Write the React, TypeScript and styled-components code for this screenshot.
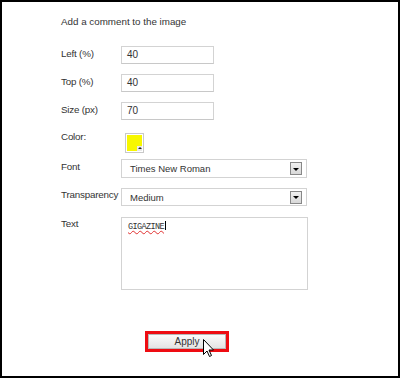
import React from "react";
import styled, { createGlobalStyle } from "styled-components";

const Global = createGlobalStyle`
  html, body {
    margin: 0;
    padding: 0;
    background: #fff;
  }
  * {
    box-sizing: border-box;
  }
`;

const Frame = styled.div`
  width: 400px;
  height: 378px;
  border: 2px solid #000;
  padding: 14px 0 0 59px;
  font-family: "Liberation Sans", Arial, sans-serif;
  color: #333;
  background: #fff;
`;

const Title = styled.div`
  font-size: 9.8px;
  line-height: 12px;
  height: 12px;
`;

const Row = styled.div<{ $mt: number }>`
  display: flex;
  align-items: flex-start;
  margin-top: ${(p) => p.$mt}px;
`;

const Label = styled.div<{ $pt: number }>`
  width: 60px;
  flex-shrink: 0;
  font-size: 9.8px;
  letter-spacing: -0.2px;
  line-height: 12px;
  padding-top: ${(p) => p.$pt}px;
  white-space: nowrap;
`;

const TextInput = styled.div`
  width: 93px;
  height: 18px;
  border: 1px solid #d3d3d3;
  border-bottom-color: #c8c8c8;
  padding: 0 0 0 5px;
  font-size: 10px;
  line-height: 16px;
  color: #333;
`;

const Swatch = styled.div`
  position: relative;
  width: 19px;
  height: 20px;
  margin: 3px 0 0 4px;
  border: 1px solid #c9c9c9;
  background: #fff;
  padding: 1px;
`;

const SwatchFill = styled.div`
  width: 100%;
  height: 100%;
  background: #f7f700;
`;

const SwatchArrow = styled.div`
  position: absolute;
  right: 1px;
  bottom: 1px;
  width: 5px;
  height: 5px;
  background: #e8e8e8;
  &::after {
    content: "";
    position: absolute;
    left: 1px;
    top: 1px;
    border-left: 2px solid transparent;
    border-right: 2px solid transparent;
    border-bottom: 2px solid #222;
  }
`;

const Select = styled.div<{ $h: number }>`
  width: 186px;
  height: ${(p) => p.$h}px;
  border: 1px solid #d3d3d3;
  display: flex;
  align-items: center;
  justify-content: space-between;
  padding: 0 4px 0 8px;
  font-size: 9.5px;
  color: #333;
`;

const DropButton = styled.div`
  width: 12px;
  height: 13px;
  border: 1px solid #888;
  background: linear-gradient(#f0f0f0, #d8d8d8);
  display: flex;
  align-items: center;
  justify-content: center;
  &::after {
    content: "";
    border-left: 3px solid transparent;
    border-right: 3px solid transparent;
    border-top: 3px solid #000;
    margin-top: 1px;
  }
`;

const TextArea = styled.div`
  width: 187px;
  height: 73px;
  border: 1px solid #d3d3d3;
  padding: 3px 0 0 6px;
  font-family: "Liberation Mono", "Courier New", monospace;
  font-size: 8.5px;
  line-height: 11px;
  color: #333;
  letter-spacing: -0.6px;
`;

const Misspelled = styled.span`
  text-decoration: underline wavy #e03030;
  text-decoration-thickness: 1px;
  text-underline-offset: 1px;
`;

const Caret = styled.span`
  display: inline-block;
  width: 1px;
  height: 9px;
  background: #000;
  vertical-align: -1px;
  margin-left: 1px;
`;

const ApplyWrap = styled.div`
  position: relative;
  margin: 41px 0 0 84px;
  width: 84px;
  height: 21px;
  border: 3px solid #ee0c12;
`;

const ApplyButton = styled.div`
  width: 100%;
  height: 100%;
  border: 1px solid #b8b8b8;
  background: linear-gradient(#fbfbfb, #e4e4e4);
  font-size: 10px;
  line-height: 13px;
  text-align: center;
  color: #333;
`;

const Cursor = styled.svg`
  position: absolute;
  left: 55px;
  top: 5px;
`;

const App = () => {
  return (
    <Frame>
      <Global />
      <Title>Add a comment to the image</Title>
      <Row $mt={18}>
        <Label $pt={2}>Left (%)</Label>
        <TextInput>40</TextInput>
      </Row>
      <Row $mt={10}>
        <Label $pt={2}>Top (%)</Label>
        <TextInput>40</TextInput>
      </Row>
      <Row $mt={10}>
        <Label $pt={2}>Size (px)</Label>
        <TextInput>70</TextInput>
      </Row>
      <Row $mt={10}>
        <Label $pt={1}>Color:</Label>
        <Swatch>
          <SwatchFill />
          <SwatchArrow />
        </Swatch>
      </Row>
      <Row $mt={6}>
        <Label $pt={2}>Font</Label>
        <Select $h={19}>
          <span>Times New Roman</span>
          <DropButton />
        </Select>
      </Row>
      <Row $mt={10}>
        <Label $pt={1}>Transparency</Label>
        <Select $h={18}>
          <span>Medium</span>
          <DropButton />
        </Select>
      </Row>
      <Row $mt={11}>
        <Label $pt={1}>Text</Label>
        <TextArea>
          <Misspelled>GIGAZINE</Misspelled>
          <Caret />
        </TextArea>
      </Row>
      <ApplyWrap>
        <ApplyButton>Apply</ApplyButton>
        <Cursor width="12" height="19" viewBox="0 0 12 19">
          <path
            d="M0.5 0.5 L0.5 15.5 L4 12 L6.5 17.5 L8.5 16.5 L6 11 L10.5 11 Z"
            fill="#fff"
            stroke="#000"
            strokeWidth="1"
          />
        </Cursor>
      </ApplyWrap>
    </Frame>
  );
};

export default App;
